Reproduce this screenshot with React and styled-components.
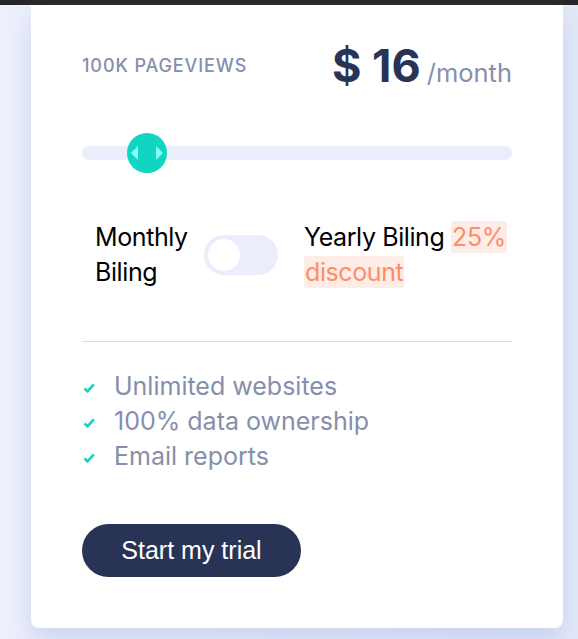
import React from 'react';
import styled, { createGlobalStyle } from 'styled-components';

const COLORS = {
    NAVY: '#293356',
    GREY_BLUE: '#858fad',
    CYAN: '#10d5c2',
    CYAN_LIGHT: '#86fff2',
    TRACK: '#eaeefb',
    BADGE_BG: '#feece7',
    BADGE_TEXT: '#ff8d68',
};

const GlobalStyle = createGlobalStyle`
    body {
        margin: 0;
        background: linear-gradient(90deg, #edf0fc 0%, #e4e9f8 100%);
        font-family: Inter, "Noto Sans", sans-serif;
    }
`;

const FEATURES = ['Unlimited websites', '100% data ownership', 'Email reports'];

function Thumb() {
    return (
        <SliderThumb>
            <svg width="40" height="40" viewBox="0 0 40 40">
                <polygon points="11,13 11,27 4,20" fill={COLORS.CYAN_LIGHT} />
                <polygon points="29,13 29,27 36,20" fill={COLORS.CYAN_LIGHT} />
            </svg>
        </SliderThumb>
    );
}

function Check() {
    return (
        <svg width="12" height="10" viewBox="0 0 12 10">
            <path d="M1.5 5.5 L4.5 8.3 L10.8 1.5" fill="none" stroke={COLORS.CYAN} strokeWidth="2.6" />
        </svg>
    );
}

function App() {
    return (
        <>
            <GlobalStyle />
            <TopBar />
            <Page>
                <Card>
                    <Header>
                        <Pageviews>100K Pageviews</Pageviews>
                        <Price>
                            <Amount>$ 16</Amount>
                            <Period>/month</Period>
                        </Price>
                    </Header>

                    <Slider>
                        <Track />
                        <Thumb />
                    </Slider>

                    <BillingRow>
                        <BillingLabel width={96}>Monthly Biling</BillingLabel>
                        <Toggle>
                            <Knob />
                        </Toggle>
                        <BillingLabel width={206}>
                            Yearly Biling <Badge>25%</Badge> <Badge>discount</Badge>
                        </BillingLabel>
                    </BillingRow>

                    <Divider />

                    <FeatureList>
                        {FEATURES.map((f) => (
                            <Feature key={f}>
                                <Check />
                                {f}
                            </Feature>
                        ))}
                    </FeatureList>

                    <TrialButton>Start my trial</TrialButton>
                </Card>
            </Page>
        </>
    );
}

const TopBar = styled.div`
    height: 5px;
    background: #262626;
`;

const Page = styled.div`
    padding: 0 0 11px 31px;
`;

const Card = styled.div`
    width: 532px;
    box-sizing: border-box;
    padding: 35px 51px 51px;
    background: #fff;
    border-radius: 0 0 8px 8px;
    box-shadow: 0 14px 26px rgba(150, 165, 220, 0.35);
`;

const Header = styled.div`
    display: flex;
    justify-content: space-between;
    align-items: center;
    height: 50px;
`;

const Pageviews = styled.div`
    font-size: 18px;
    font-weight: 500;
    letter-spacing: 0.9px;
    text-transform: uppercase;
    color: ${COLORS.GREY_BLUE};
`;

const Price = styled.div`
    display: flex;
    align-items: baseline;
    gap: 6px;
`;

const Amount = styled.span`
    font-size: 45px;
    font-weight: 700;
    color: ${COLORS.NAVY};
    line-height: 1;
`;

const Period = styled.span`
    font-size: 25.5px;
    color: ${COLORS.GREY_BLUE};
`;

const Slider = styled.div`
    position: relative;
    height: 40px;
    margin-top: 43px;
    display: flex;
    align-items: center;
`;

const Track = styled.div`
    flex: 1;
    height: 14px;
    border-radius: 7px;
    background: ${COLORS.TRACK};
`;

const SliderThumb = styled.div`
    position: absolute;
    left: 45px;
    top: 0;
    width: 40px;
    height: 40px;
    border-radius: 50%;
    background: ${COLORS.CYAN};
    svg { display: block; }
`;

const BillingRow = styled.div`
    display: flex;
    align-items: center;
    margin-top: 47px;
    padding-left: 13px;
`;

const BillingLabel = styled.div`
    flex-shrink: 0;
    width: ${(p) => p.width}px;
    font-size: 25px;
    letter-spacing: -0.4px;
    line-height: 35px;
    color: #000;
`;

const Toggle = styled.div`
    flex-shrink: 0;
    width: 74px;
    height: 40px;
    margin: 0 26px 0 13px;
    border-radius: 20px;
    background: ${COLORS.TRACK};
    display: flex;
    align-items: center;
    padding-left: 4px;
    box-sizing: border-box;
`;

const Knob = styled.div`
    width: 32px;
    height: 32px;
    border-radius: 50%;
    background: #fff;
`;

const Badge = styled.span`
    background: ${COLORS.BADGE_BG};
    color: ${COLORS.BADGE_TEXT};
    border-radius: 3px;
    padding: 1px 1px;
`;

const Divider = styled.hr`
    margin: 51px 0 0;
    border: none;
    border-top: 1px solid #dcdcdc;
`;

const FeatureList = styled.ul`
    list-style: none;
    margin: 27px 0 0;
    padding: 0;
`;

const Feature = styled.li`
    display: flex;
    align-items: center;
    gap: 19px;
    padding-left: 1px;
    font-size: 25px;
    line-height: 35px;
    color: ${COLORS.GREY_BLUE};

    svg { margin-top: 2px; }
`;

const TrialButton = styled.button`
    display: block;
    margin-top: 50px;
    width: 219px;
    height: 53px;
    border: none;
    border-radius: 27px;
    background: ${COLORS.NAVY};
    color: #fff;
    font-family: "Liberation Sans", Arial, sans-serif;
    font-size: 25px;
`;

export default App;
